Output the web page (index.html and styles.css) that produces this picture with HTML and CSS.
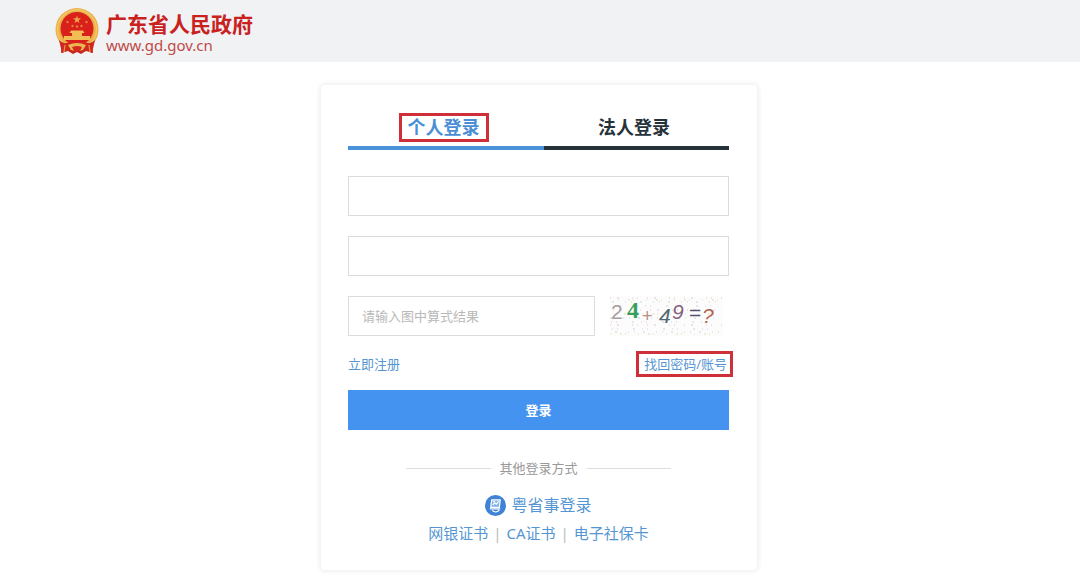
FILE: index.html
```html
<!DOCTYPE html>
<html lang="zh-CN">
<head>
<meta charset="utf-8">
<meta name="viewport" content="width=device-width, initial-scale=1">
<title>广东省人民政府 - 登录</title>
<link rel="stylesheet" href="styles.css">
</head>
<body>
<header class="site-header">
  <svg class="emblem" viewBox="0 0 44 46" aria-hidden="true">
    <path d="M7 31 L6 45 L13 43 L18 46 L22 44 L26 46 L31 43 L38 45 L37 31Z" fill="#c8261d"/>
    <circle cx="22" cy="21.500" r="21.500" fill="#e9b14a"/>
    <circle cx="22" cy="21.500" r="19.500" fill="none" stroke="#f3c765" stroke-width="1.500"/>
    <circle cx="22" cy="20.500" r="16.500" fill="#d9201a"/>
    <path d="M22 7.500l1 2.700 3 .1-2.300 1.900.8 2.900-2.500-1.700-2.500 1.700.8-2.900-2.300-1.900 3-.1z" fill="#eda04a"/>
    <g fill="#e5803a"><circle cx="12.500" cy="14" r="1.200"/><circle cx="31.500" cy="14" r="1.200"/><circle cx="17.500" cy="18" r="1.200"/><circle cx="22" cy="18.500" r="1.200"/><circle cx="26.500" cy="18" r="1.200"/></g>
    <path d="M16 22.500H28L29.500 25H27V28H35V32H9V28H17V25H14.500Z" fill="#f2bd55"/>
    <path d="M4 32Q8 36 11 35L15 34H29L33 35Q36 36 40 32L37 45L31 42H13L7 45Z" fill="#d0271e"/>
    <path d="M13 37Q22 33 31 37L28 42H16Z" fill="#efb74f"/>
    <path d="M17 39Q22 37 27 39L25 43H19Z" fill="#d52a20"/>
    <path d="M10 37L9 44M34 37L35 44" stroke="#e9983f" stroke-width="1.200"/>
  </svg>
  <div class="brand">
    <span class="brand-name">广东省人民政府</span>
    <span class="brand-url">www.gd.gov.cn</span>
  </div>
</header>
<main class="page">
  <form class="card">
    <div class="tabs" role="tablist">
      <button class="tab tab-active" type="button" role="tab" aria-selected="true"><span class="tab-label marked">个人登录</span></button>
      <button class="tab" type="button" role="tab" aria-selected="false"><span class="tab-label">法人登录</span></button>
    </div>
    <input class="field" type="text" aria-label="账号">
    <input class="field" type="password" aria-label="密码">
    <div class="captcha-row">
      <input class="field" type="text" aria-label="验证码" placeholder="请输入图中算式结果">
      <svg class="captcha" viewBox="0 0 112 40" role="img" aria-label="24+49=?">
        <rect width="112" height="40" fill="#fdfcfc"/>
        <g fill="none" stroke-width="1">
          <path d="M0 2H112M3 14H112M0 29H112" stroke="#e5c3cf" stroke-dasharray="1 6 2 13 1 4 1 9"/>
          <path d="M2 6H112M0 22H112M5 36H112" stroke="#c9d9c6" stroke-dasharray="2 11 1 5 1 8"/>
          <path d="M5 10H112M1 26H112M2 33H112" stroke="#d3cbe2" stroke-dasharray="1 4 1 15 2 7"/>
          <path d="M8 4H112M4 18H112M0 38H112" stroke="#ead8b8" stroke-dasharray="1 9 2 3 1 12"/>
        </g>
        <g class="captcha-text">
          <text x="1" y="23" fill="#a79da3">2</text>
          <text class="captcha-serif" x="17" y="22" fill="#36a05a">4</text>
          <text class="captcha-small" x="32" y="26" fill="#b88e83">+</text>
          <text class="captcha-slant" x="49" y="27" fill="#4f6673">4</text>
          <text class="captcha-slant" x="62" y="23" fill="#84627e">9</text>
          <text x="79" y="24" fill="#535078">=</text>
          <text class="captcha-slant" x="92" y="27" fill="#b3634f">?</text>
        </g>
      </svg>
    </div>
    <div class="links">
      <a href="#register">立即注册</a>
      <a class="marked recover" href="#recover">找回密码/账号</a>
    </div>
    <button class="submit" type="submit">登录</button>
    <div class="divider">其他登录方式</div>
    <a class="yss" href="#yss">
      <svg class="yss-icon" viewBox="0 0 22 22" aria-hidden="true">
        <circle cx="11" cy="11" r="11" fill="#3f82d6"/>
        <path d="M7 5H16L15 13H6Z" fill="#7eb0eb" stroke="#fff" stroke-width="1.300" stroke-linejoin="round"/>
        <path d="M8.500 10L10.500 8.500L12 9.500L14 7M9 7H10M5.500 14.500H15.500M8 16.500C10 18 13 18 14.500 16" fill="none" stroke="#fff" stroke-width="1.300" stroke-linecap="round"/>
      </svg>
      粤省事登录
    </a>
    <nav class="methods" aria-label="其他登录方式">
      <a href="#bank">网银证书</a>
      <a href="#ca">CA证书</a>
      <a href="#card">电子社保卡</a>
    </nav>
  </form>
</main>
</body>
</html>
```
FILE: styles.css
```css
* {
  box-sizing: border-box;
}

body {
  margin: 0;
  background: #fff;
  color: #26323a;
  font-family: "Noto Sans", "Noto Sans CJK SC", sans-serif;
  font-size: 13px;
  line-height: 20px;
}

a {
  color: #5596d2;
  text-decoration: none;
}

button,
input {
  font: inherit;
}

.site-header {
  display: flex;
  align-items: center;
  gap: 7px;
  padding: 8px 55px;
  background: #f1f2f4;
}

.emblem {
  width: 44px;
  height: 46px;
}

.brand {
  display: flex;
  flex-direction: column;
  padding-top: 4px;
}

.brand-name {
  color: #c9211e;
  font-size: 21px;
  font-weight: 700;
  line-height: 24px;
}

.brand-url {
  color: #c04a48;
  font-size: 15px;
  line-height: 18px;
}

.page {
  padding: 23px 2px 8px 0;
}

.card {
  display: flex;
  flex-direction: column;
  max-width: 436px;
  margin: 0 auto;
  padding: 26px 28px 27px 27px;
  border-radius: 4px;
  background: #fff;
  box-shadow: 0 0 4px 2px #f0f0f0;
}

.tabs {
  display: grid;
  grid-template-columns: 196fr 185fr;
  margin-bottom: 26px;
}

.tab {
  padding: 2px 5px 4px 0;
  border: 0;
  border-bottom: 4px solid #26323a;
  background: none;
  color: #26323a;
  font-size: 18px;
  font-weight: 700;
  line-height: 23px;
}

.tab-active {
  border-color: #4a93da;
  color: #4a8fd6;
}

.tab-label {
  display: inline-block;
  padding: 3px 9px;
}

.marked {
  outline: 3px solid #cf2f38;
  outline-offset: -3px;
}

.field {
  width: 100%;
  min-width: 0;
  height: 40px;
  margin-bottom: 20px;
  padding: 0 13px;
  border: 1px solid #dcdcdc;
  background: #fff;
}

.field::placeholder {
  color: #b9b9b9;
  opacity: 1;
}

.captcha-row {
  display: grid;
  grid-template-columns: 1fr 112px;
  gap: 15px;
  padding-right: 7px;
}

.captcha-row .field {
  margin-bottom: 15px;
}

.captcha {
  width: 112px;
  height: 40px;
}

.captcha-text {
  font-family: "Liberation Sans", sans-serif;
  font-size: 21px;
}

.captcha-serif {
  font-family: "Liberation Serif", serif;
  font-size: 24px;
  font-weight: 700;
}

.captcha-small {
  font-size: 18px;
}

.captcha-slant {
  font-style: italic;
}

.links {
  display: flex;
  justify-content: space-between;
  align-items: center;
  margin-bottom: 13px;
}

.recover {
  margin-right: -4px;
  padding: 3px 6px 3px 8px;
}

.submit {
  height: 40px;
  border: 0;
  background: #4493f0;
  color: #fff;
  font-weight: 700;
}

.divider {
  display: flex;
  align-items: center;
  gap: 9px;
  margin: 28px 58px 16px;
  color: #999;
  white-space: nowrap;
}

.divider::before,
.divider::after {
  flex: 1;
  height: 1px;
  background: #dedede;
  content: "";
}

.yss {
  display: flex;
  align-items: center;
  align-self: center;
  gap: 5px;
  font-size: 16px;
  line-height: 22px;
}

.yss-icon {
  width: 21px;
  height: 21px;
}

.methods {
  display: flex;
  justify-content: center;
  margin-top: 7px;
  font-size: 15px;
}

.methods a + a::before {
  margin: 0 5px;
  color: #bbb;
  content: "|";
}
```
